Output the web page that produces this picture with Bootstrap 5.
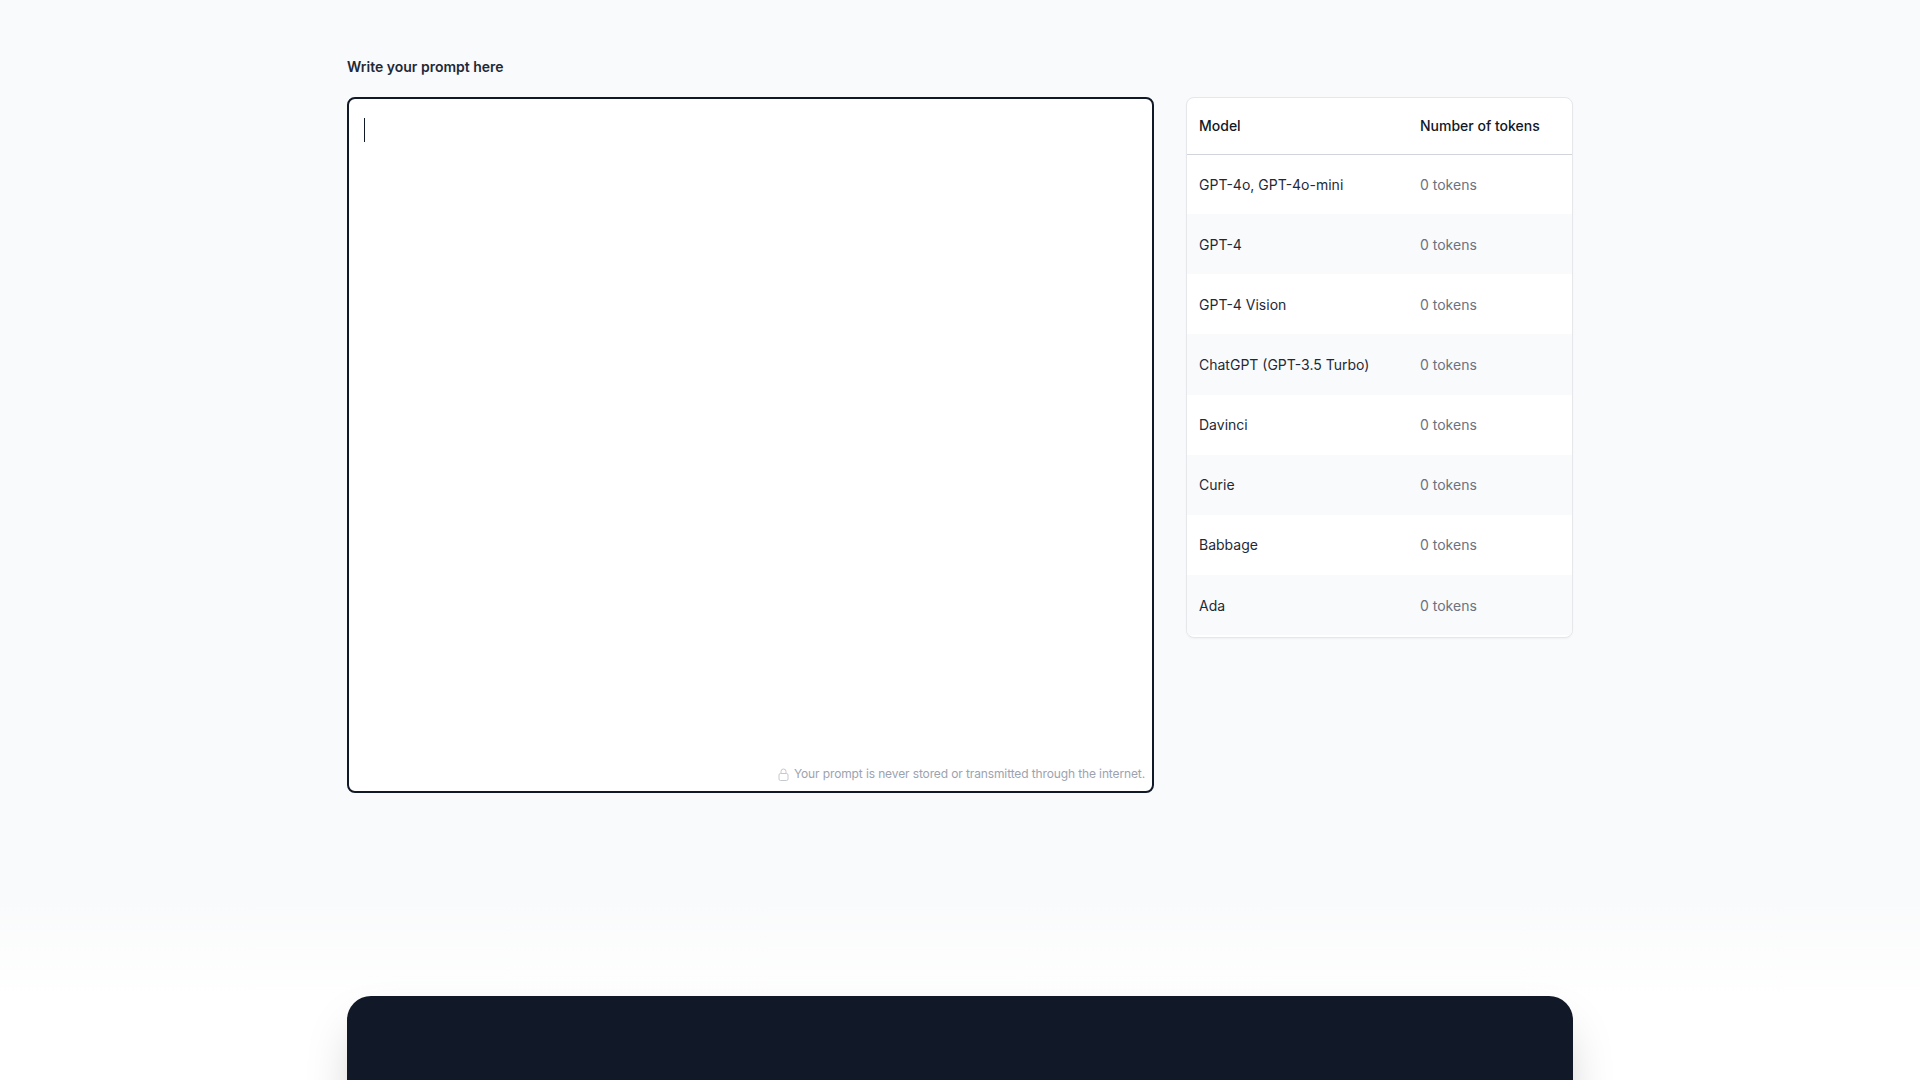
<!DOCTYPE html>
<html lang="en">
<head>
<meta charset="utf-8">
<title>Tokenizer</title>
<link href="https://cdn.jsdelivr.net/npm/bootstrap@5.3.0/dist/css/bootstrap.min.css" rel="stylesheet">
<style>
html,body{height:1080px;overflow:hidden}
body{font-family:Inter,"Liberation Sans",sans-serif;background:linear-gradient(#f9fafb 0,#f9fafb 900px,#fff 1000px);color:#111827;font-size:14px}
.page-wrap{width:1226px;margin:0 auto;padding-top:57px}
.prompt-label{font-size:14px;font-weight:600;line-height:20px;color:#1f2937;margin-bottom:20px}
.main-row{gap:32px}
.editor{width:807px;height:696px;background:#fff;border:2px solid #111827;border-radius:8px;padding:19px 15px}
.caret-bar{display:block;width:1px;height:24px;background:#111827}
.privacy{right:7px;bottom:9px;font-size:12px;line-height:16px;color:#9ca3af;gap:5px;letter-spacing:-.01em}
.token-box{width:387px;height:541px;background:#fff;border:1px solid #e5e7eb;border-radius:8px;overflow:hidden;box-shadow:0 1px 2px rgba(0,0,0,.04)}
.token-table{width:100%;margin:0;font-size:14px;border-collapse:collapse}
.token-table th,.token-table td{padding:0 12px;height:60.15px;vertical-align:middle;background:transparent;border:0;color:#1f2937;box-shadow:none}
.token-table th{font-weight:500;height:56px;color:#111827;border-bottom:1px solid #d1d5db}
.token-table td:last-child{color:#6b7280}
.token-table tbody tr:nth-child(even) td{background:#f9fafb}
.col-model{width:221px}
.dark-panel{height:200px;margin-top:203px;background:#111827;border-radius:24px;box-shadow:0 25px 50px -12px rgba(0,0,0,.25)}
</style>
</head>
<body>
<div class="page-wrap">
  <div class="prompt-label">Write your prompt here</div>
  <div class="d-flex align-items-start main-row">
    <div class="editor position-relative flex-shrink-0">
      <span class="caret-bar"></span>
      <div class="privacy position-absolute d-flex align-items-center">
        <svg width="11" height="13" viewBox="0 0 11 13" fill="none" stroke="#c4c8cf" stroke-width="1"><rect x="1" y="5.5" width="9" height="7" rx="1.5"/><path d="M3 5.5V3.5a2.5 2.5 0 0 1 5 0v2"/></svg>
        <span>Your prompt is never stored or transmitted through the internet.</span>
      </div>
    </div>
    <div class="token-box flex-shrink-0">
      <table class="table token-table">
        <thead><tr><th class="col-model">Model</th><th>Number of tokens</th></tr></thead>
        <tbody>
          <tr><td>GPT-4o, GPT-4o-mini</td><td>0 tokens</td></tr>
          <tr><td>GPT-4</td><td>0 tokens</td></tr>
          <tr><td>GPT-4 Vision</td><td>0 tokens</td></tr>
          <tr><td>ChatGPT (GPT-3.5 Turbo)</td><td>0 tokens</td></tr>
          <tr><td>Davinci</td><td>0 tokens</td></tr>
          <tr><td>Curie</td><td>0 tokens</td></tr>
          <tr><td>Babbage</td><td>0 tokens</td></tr>
          <tr><td>Ada</td><td>0 tokens</td></tr>
        </tbody>
      </table>
    </div>
  </div>
  <div class="dark-panel"></div>
</div>
<script src="https://cdn.jsdelivr.net/npm/bootstrap@5.3.0/dist/js/bootstrap.bundle.min.js"></script>
</body>
</html>
